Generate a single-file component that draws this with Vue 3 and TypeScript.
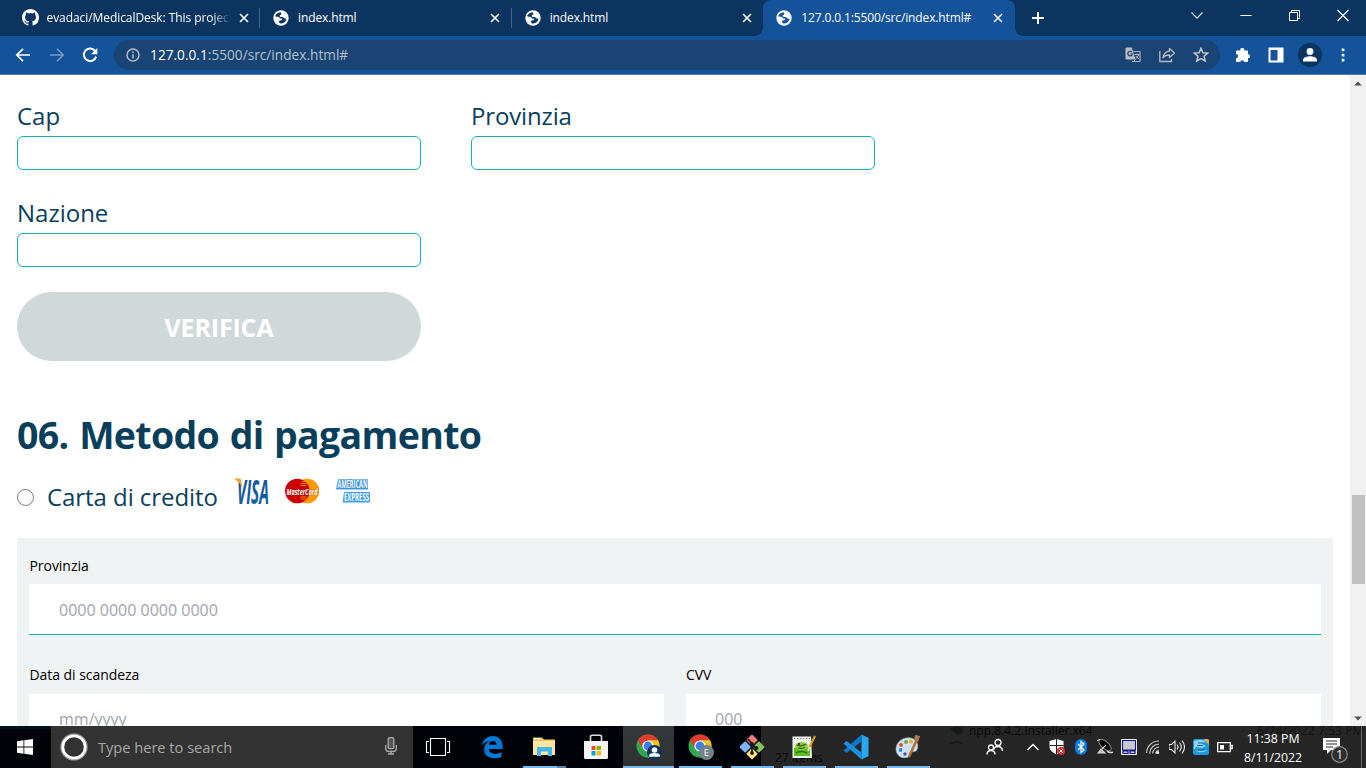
<script setup lang="ts">
import { ref } from 'vue'

interface Tab {
  title: string
  icon: 'github' | 'globe'
  active?: boolean
}

const tabs: Tab[] = [
  { title: 'evadaci/MedicalDesk: This project', icon: 'github' },
  { title: 'index.html', icon: 'globe' },
  { title: 'index.html', icon: 'globe' },
  { title: '127.0.0.1:5500/src/index.html#', icon: 'globe', active: true },
]

const apps = [
  { name: 'taskview', open: false },
  { name: 'edge', open: false },
  { name: 'explorer', open: true },
  { name: 'store', open: false },
  { name: 'chrome', open: true },
  { name: 'chrome-e', open: true },
  { name: 'git', open: true },
  { name: 'npp', open: true },
  { name: 'vscode', open: true },
  { name: 'paint', open: true },
]

const cap = ref('')
const provincia = ref('')
const nazione = ref('')
const cardNumber = ref('')
const expiry = ref('')
const cvv = ref('')
</script>

<template>
  <div class="screen">
    <header class="tabstrip">
      <div v-for="(t, i) in tabs" :key="i" class="tab" :class="{ active: t.active, sep: i < 2 }">
        <svg v-if="t.icon === 'github'" class="fav gh" viewBox="0 0 16 16"><path fill="#fff" d="M8 0C3.58 0 0 3.58 0 8c0 3.54 2.29 6.53 5.47 7.59.4.07.55-.17.55-.38 0-.19-.01-.82-.01-1.49-2.01.37-2.53-.49-2.69-.94-.09-.23-.48-.94-.82-1.13-.28-.15-.68-.52-.01-.53.63-.01 1.08.58 1.23.82.72 1.21 1.87.87 2.33.66.07-.52.28-.87.51-1.07-1.78-.2-3.64-.89-3.64-3.95 0-.87.31-1.59.82-2.15-.08-.2-.36-1.02.08-2.12 0 0 .67-.21 2.2.82a7.6 7.6 0 0 1 4 0c1.53-1.04 2.2-.82 2.2-.82.44 1.1.16 1.92.08 2.12.51.56.82 1.27.82 2.15 0 3.07-1.87 3.75-3.65 3.95.29.25.54.73.54 1.48 0 1.07-.01 1.93-.01 2.2 0 .21.15.46.55.38A8.01 8.01 0 0 0 16 8c0-4.42-3.58-8-8-8z" /></svg>
        <svg v-else class="fav" viewBox="0 0 16 16">
          <circle cx="8" cy="8" r="7.7" fill="#fff" />
          <path class="land" d="M7.500 2.200C5 2.500 3 3.800 2.200 6c1.300 1.200 2.300.4 3.500.9 1.200.5.9 1.500 2.100 1.700 1 .2 1.500.1 1.400.8-.2.9-1.400.6-2.200 1l-1.100.9.2 1.300 1.300.9c2 .3 4.300-.8 5.300-2.700l.8-2.100-1.700-.3c-1.200 0-1.300-1.200-2.200-1.400H7.700L6.500 6c.1-1 1.300-.9 1.800-1.700.3-.7 0-1.500-.8-2.100z" />
        </svg>
        <span class="tab-title">{{ t.title }}</span>
        <svg class="close" viewBox="0 0 10 10"><path d="M1 1l8 8M9 1l-8 8" stroke="#fff" stroke-width="1.6" /></svg>
      </div>
      <svg class="plus" viewBox="0 0 14 14"><path d="M7 1v12M1 7h12" stroke="#fff" stroke-width="2" /></svg>
      <div class="winctl">
        <svg viewBox="0 0 14 14"><path d="M1.500 4.500l5.500 5.700L12.500 4.500" fill="none" stroke="#dde4ec" stroke-width="1.100" /></svg>
        <svg viewBox="0 0 14 14"><path d="M1.500 7.500h11" stroke="#fff" /></svg>
        <svg viewBox="0 0 14 14"><path d="M2.500 4.500h8v8h-8zM4.500 4.500v-2h8v8h-2" fill="none" stroke="#fff" /></svg>
        <svg viewBox="0 0 14 14"><path d="M1.500 2l11 11M12.500 2l-11 11" stroke="#fff" stroke-width="1.1" /></svg>
      </div>
    </header>

    <nav class="toolbar">
      <svg class="nav-ic" viewBox="0 0 16 16"><path d="M15 8H2M8 1.800L1.800 8 8 14.200" fill="none" stroke="#fff" stroke-width="1.700" /></svg>
      <svg class="nav-ic" viewBox="0 0 16 16"><path d="M1 8h13M8 1.800L14.200 8 8 14.200" fill="none" stroke="#7a9cc6" stroke-width="1.500" /></svg>
      <svg class="nav-ic" viewBox="0 0 16 16"><path d="M13.400 4.200A6.300 6.300 0 1 0 14.200 9.600" fill="none" stroke="#fff" stroke-width="2" /><path d="M15.300 1v6.300H9z" fill="#fff" /></svg>
      <div class="omnibox">
        <svg class="info" viewBox="0 0 14 14"><circle cx="7" cy="7" r="6" fill="none" stroke="#b7bec7" stroke-width="1.500" /><path d="M7 6.200v4.300M7 3.500v1.500" stroke="#b7bec7" stroke-width="1.500" /></svg>
        <span class="url"><b>127.0.0.1</b>:5500/src/index.html#</span>
        <div class="omni-actions">
          <svg viewBox="0 0 16 16">
            <path d="M6 4.500h9v10H7" fill="none" stroke="#a9b0b8" stroke-width="1.200" />
            <path d="M.5 1.500Q.5.500 1.500.500H6.700L10.500 12.500H1.500Q.5 12.500.5 11.500z" fill="#b9bdc3" />
            <path d="M7 5.200A2.300 2.300 0 1 0 7.400 7H5.300" fill="none" stroke="#194473" stroke-width="1.200" />
            <path d="M9.500 7.500h5M12 6.500v1M13.500 7.700c-.4 2-1.800 3.200-3 4M10.800 9l3 3M8 15l2.500-2.500" fill="none" stroke="#b9bdc3" />
          </svg>
          <svg viewBox="0 0 16 16"><path d="M.800 4v10.500H12.500V12" fill="none" stroke="#b9bdc3" stroke-width="1.300" /><path d="M10.500 1.500L15.500 6l-5 4.500V8c-3 0-5 .8-6.500 2.700C4.700 7.200 6.600 4.500 10.500 4z" fill="none" stroke="#b9bdc3" stroke-width="1.300" stroke-linejoin="round" /></svg>
          <svg viewBox="0 0 16 16"><path d="M8 1.200l1.900 4.500 4.800.4-3.600 3.200 1.100 4.700L8 11.500 3.800 14l1.100-4.700L1.300 6.100l4.800-.4z" fill="none" stroke="#c3c7cc" stroke-width="1.500" /></svg>
        </div>
      </div>
      <div class="ext">
        <svg viewBox="0 0 16 16"><path fill="#fff" d="M2 3.500h3.300a2 2 0 1 1 3.900 0H12.300Q13 3.500 13 4.200V7.200a2 2 0 1 1 0 4v3Q13 15 12.300 15H9.300a2.100 2.100 0 0 0-4.100 0H2Q1 15 1 14.200V11.300a2.100 2.100 0 0 0 0-4.200V4.200Q1 3.500 2 3.500z" /></svg>
        <svg viewBox="0 0 16 16"><path fill="#fff" fill-rule="evenodd" d="M.5.500h15v15H.5zM2.500 3v10.500h7V3z" /></svg>
        <svg class="profile" viewBox="0 0 24 24"><circle cx="12" cy="12" r="12" fill="#0c3460" /><circle cx="12" cy="8.500" r="3.400" fill="#fff" /><path d="M5 18.500v-1.700c0-2.500 4.500-3.500 7-3.500s7 1 7 3.500v1.700z" fill="#fff" /></svg>
        <svg viewBox="0 0 16 16"><path d="M6.700 1.500h2.700v2.700H6.700zM6.700 6.700h2.700v2.700H6.700zM6.700 11.800h2.700v2.700H6.700z" fill="#e8eef5" /></svg>
      </div>
    </nav>

    <div class="viewport">
      <main class="page">
        <form class="address" @submit.prevent>
          <label class="field"><span>Cap</span><input v-model="cap" type="text" /></label>
          <label class="field"><span class="tight">Provinzia</span><input v-model="provincia" type="text" /></label>
          <label class="field"><span>Nazione</span><input v-model="nazione" type="text" /></label>
        </form>
        <button class="verify" type="button">VERIFICA</button>

        <h1>06. Metodo di pagamento</h1>
        <div class="method">
          <span class="radio"></span>
          <span class="method-name">Carta di credito</span>
          <svg class="card visa" viewBox="0 0 34 26">
            <defs><linearGradient id="vg" x2="0" y2="1"><stop stop-color="#164f93" /><stop offset="1" stop-color="#1463a5" /></linearGradient></defs>
            <text x="2" y="25.500" textLength="32" lengthAdjust="spacingAndGlyphs" font-size="34" font-weight="700" font-style="italic" fill="url(#vg)">VISA</text>
            <path d="M0 .500h5.500L8 12Q6 5 0 1.500z" fill="#f2a62c" />
          </svg>
          <svg class="card" viewBox="0 0 34 26">
            <circle cx="22" cy="13" r="12.300" fill="#f90" />
            <circle cx="12.300" cy="13" r="12.300" fill="#c00" />
            <path d="M17 3.500h5M15.500 5.500h6M15.500 7.500h6M15.500 19h6M15.500 21h6" stroke="#f90" stroke-width=".9" />
            <text x="1.500" y="16.700" textLength="31" lengthAdjust="spacingAndGlyphs" font-size="9.500" font-weight="700" font-style="italic" fill="#fff" stroke="#7a1a10" stroke-width=".5" paint-order="stroke">MasterCard</text>
          </svg>
          <svg class="card" viewBox="0 0 34 26">
            <path d="M2 1.500h30v10H0z" fill="#4ba6e6" />
            <path d="M8 14h26v10.500H6.500z" fill="#4ba6e6" />
            <text x="1.500" y="10.300" textLength="30" lengthAdjust="spacingAndGlyphs" font-size="10.500" font-weight="700" fill="#fff" stroke="#1d78c4" stroke-width="1" paint-order="stroke">AMERICAN</text>
            <text x="8" y="23.200" textLength="25" lengthAdjust="spacingAndGlyphs" font-size="10.500" font-weight="700" fill="#fff" stroke="#2e8fdc" stroke-width="1" paint-order="stroke">EXPRESS</text>
          </svg>
        </div>

        <section class="panel">
          <label class="pay"><span>Provinzia</span><input v-model="cardNumber" placeholder="0000 0000 0000 0000" /></label>
          <div class="pay-row">
            <label class="pay"><span>Data di scandeza</span><input v-model="expiry" placeholder="mm/yyyy" /></label>
            <label class="pay"><span>CVV</span><input v-model="cvv" placeholder="000" /></label>
          </div>
        </section>
      </main>
      <aside class="scrollbar">
        <svg viewBox="0 0 17 17"><path d="M4.500 10.500h8L8.500 6.500z" fill="#505050" /></svg>
        <div class="thumb"></div>
        <svg viewBox="0 0 17 17"><path d="M4.500 6.500h8L8.500 10.500z" fill="#505050" /></svg>
      </aside>
    </div>

    <footer class="taskbar">
      <span class="ghost g-items">27 items</span>
      <span class="ghost g-file">npp.8.4.2.Installer.x64</span>
      <span class="ghost g-date">6/24/2022 7:53 PM</span>
      <svg class="ghost g-icon" viewBox="0 0 16 19"><path d="M1 3l6-3 7 2-1 5-5 2-3-3z" fill="#151b17" /><path d="M1 18q7-4 13 0" fill="none" stroke="#171717" stroke-width="1.500" /></svg>
      <div class="start"><svg viewBox="0 0 16 16"><path fill="#fff" d="M0 2.200L6.500 1.300V7.500H0zM7.300 1.200L16 0V7.500H7.300zM0 8.400h6.500v6.300L0 13.800zM7.300 8.400H16V16l-8.700-1.200z" /></svg></div>
      <div class="search">
        <svg class="cortana" viewBox="0 0 28 28"><circle cx="14" cy="14" r="13" fill="none" stroke="#858585" stroke-width="1.600" /><circle cx="14" cy="14" r="11.200" fill="none" stroke="#fff" stroke-width="2.800" /></svg>
        <span>Type here to search</span>
        <svg class="mic" viewBox="0 0 12 18"><rect x="3.200" y=".700" width="5.600" height="11" rx="1.500" fill="#555" stroke="#aaa" stroke-width="1.300" /><path d="M.7 8v3.500q0 3 3 3h4.600q3 0 3-3V8M6 14.500V17M3 17h6" fill="none" stroke="#aaa" stroke-width="1.300" /></svg>
      </div>

      <div v-for="a in apps" :key="a.name" class="app" :class="[a.name, { open: a.open }]">
        <svg v-if="a.name === 'taskview'" viewBox="0 0 26 26"><path d="M5.500 4.500h15v17h-15zM4 7.500H1.500v11H4M22 7.500h2.500v11H22" fill="none" stroke="#fff" stroke-width="1.100" /></svg>
        <svg v-else-if="a.name === 'edge'" viewBox="0 0 26 26"><path fill="#0078d7" d="M2.800 11.400C4 5.500 8.300 2 13.700 2c6.500 0 9.900 4.700 9.900 10.300V15H9.800c.2 3.300 3.200 4.700 6.200 4.700 2.600 0 4.700-.7 6.500-1.800v4.800c-2 1.100-4.600 1.600-7.300 1.600-6 0-10-3.300-10-8.700 0-3.700 2-6.800 5.300-8.500-3.600.3-6 2-7.700 4.300zM9.900 10.700h7.700c0-2.200-1.300-3.700-3.800-3.700-2.200 0-3.600 1.500-3.900 3.700z" /></svg>
        <svg v-else-if="a.name === 'explorer'" viewBox="0 0 26 26"><path d="M2 3.500h9l2 2h11V21H2z" fill="#eac66a" /><path d="M2 7h22v14H2z" fill="#fce5a0" /><path d="M3 4h6v1.500H3z" fill="#f7f0da" /><path d="M6 22v-9h15v9h-4v-4.500h-7V22z" fill="#45b6e8" /></svg>
        <svg v-else-if="a.name === 'store'" viewBox="0 0 26 26"><path d="M7.500 7V2.500Q7.500 1.300 9 1.300h8Q18.500 1.300 18.500 2.500V7" fill="none" stroke="#ddd" stroke-width="1.600" /><path d="M1 7h24v16.500Q25 25 23.500 25h-21Q1 25 1 23.500z" fill="#f5f5f5" /><path d="M8.500 12h4v4h-4z" fill="#f25022" /><path d="M13.500 12h4.500v4h-4.500z" fill="#7fba00" /><path d="M8.500 17h4v4.500h-4z" fill="#00a4ef" /><path d="M13.500 17h4.500v4.500h-4.500z" fill="#ffb900" /></svg>
        <svg v-else-if="a.name === 'chrome' || a.name === 'chrome-e'" viewBox="0 0 26 26">
          <circle cx="12" cy="12" r="11.500" fill="#2fa84f" />
          <path d="M2 6.300A11.500 11.500 0 0 1 22 6.300H12L7.200 15z" fill="#e33b2e" />
          <path d="M22 6.300A11.500 11.500 0 0 1 12 23.500l5-9-5-8.200z" fill="#fbc116" />
          <circle cx="12" cy="12" r="5.600" fill="#fff" /><circle cx="12" cy="12" r="4.400" fill="#3b7fe8" />
          <template v-if="a.name === 'chrome'"><circle cx="18.500" cy="18.500" r="7.500" fill="#0c3460" /><circle cx="18.500" cy="16" r="2.800" fill="#fff" /><path d="M13.200 22.700v-1.500c0-1.600 3.300-2.300 5.300-2.300s5.300.7 5.300 2.300v1.500z" fill="#fff" /></template>
          <template v-else><circle cx="18.500" cy="18.500" r="7.500" fill="#72838c" /><text x="18.500" y="22" text-anchor="middle" font-size="9.500" fill="#fff">E</text></template>
        </svg>
        <svg v-else-if="a.name === 'git'" viewBox="0 0 26 26"><g transform="rotate(45 13 13)"><rect x="4" y="4" width="8.300" height="8.300" rx="1" fill="#f07c7c" /><rect x="13.700" y="4" width="8.300" height="8.300" rx="1" fill="#86c65a" /><rect x="4" y="13.700" width="8.300" height="8.300" rx="1" fill="#80b3ff" /><rect x="13.700" y="13.700" width="8.300" height="8.300" rx="1" fill="#ffe680" /></g><path d="M9 5l4 5v9M13 11l4 3" fill="none" stroke="#201818" stroke-width="1.700" /><circle cx="13" cy="10" r="1.900" fill="#201818" /><circle cx="17.500" cy="14" r="1.900" fill="#201818" /><circle cx="13" cy="19" r="1.900" fill="#201818" /></svg>
        <svg v-else-if="a.name === 'npp'" viewBox="0 0 26 26"><path d="M1.500 2.500h18.500l1 21.500H1.500z" fill="#f1f3ee" /><path d="M3 14q8-3 16 0v8H3z" fill="#5fbf22" /><ellipse cx="10.500" cy="12" rx="6.500" ry="4" fill="#93cf3d" /><path d="M6 11q4 2 9-1M7 14q3 1 7-.5" fill="none" stroke="#2f5f1e" stroke-width="1.300" /><circle cx="8" cy="10" r="1" fill="#222" /><path d="M5 19q5-3 11 0" fill="none" stroke="#1f7a16" stroke-width="1.500" /><path d="M3 4.500h16" stroke="#888" stroke-dasharray="1.500 1.500" /><path d="M24 2L18 14" stroke="#d99a25" stroke-width="2.200" /><path d="M18.300 13L17 17" stroke="#eee" stroke-width="1.500" /></svg>
        <svg v-else-if="a.name === 'vscode'" viewBox="0 0 26 26"><path d="M18.500.500L25.500 4v18l-7 3.500z" fill="#29a8f0" /><path d="M18.500.500v7L3.500 19 .500 16.500z" fill="#0e78c4" /><path d="M18.500 25.500v-7L3.500 7 .500 9.500z" fill="#1b90dc" /></svg>
        <svg v-else viewBox="0 0 26 26"><path d="M1 15C1 8 8 2.500 16 4c8 2 8 10 5 13-3 2-5-1-6 1s2 4-3 5.500C6 25 1 21 1 15z" fill="#cfe2ec" stroke="#93adbb" stroke-width=".600" /><circle cx="6" cy="11" r="1.900" fill="#e14747" /><circle cx="11" cy="8" r="2" fill="#70ad3d" /><circle cx="16" cy="7.500" r="1.900" fill="#e5b22e" /><circle cx="5.500" cy="16" r="1.900" fill="#3888da" /><circle cx="10" cy="20" r="1.700" fill="#4253b5" /><path d="M23 3L14 23" stroke="#b66b32" stroke-width="2.500" /><path d="M20 1l5 1-2 6-4-2z" fill="#a97b50" /></svg>
      </div>

      <div class="tray">
        <svg class="people" viewBox="0 0 18 18"><circle cx="12" cy="4.500" r="3" /><circle cx="5" cy="9.500" r="2.500" /><path d="M8 11.500q0-3 4-3t4.500 4.500M1 16.500q0-4 4-4t4 4" /></svg>
        <div class="tray-icons">
          <svg viewBox="0 0 16 16"><path d="M2.500 11L8 5.500l5.500 5.500" fill="none" stroke="#fff" stroke-width="1.300" /></svg>
          <svg viewBox="0 0 16 16"><path d="M7.500 0L14.500 2v6q0 4-7 7.500Q.5 12 .5 8V2z" fill="#fff" /><path d="M7.500 0v15.500M.5 6.500h14" stroke="#222" /><circle cx="12" cy="12" r="4" fill="#dc3030" /><path d="M10.300 10.300l3.400 3.400M13.700 10.300l-3.400 3.400" stroke="#fff" /></svg>
          <svg viewBox="0 0 16 16"><rect x="2" y="0" width="12" height="16" rx="6" fill="#087bea" /><path d="M5 5l6 6-3 2.500v-11L11 5l-6 6" fill="none" stroke="#fff" stroke-width="1.200" /></svg>
          <svg viewBox="0 0 16 16"><ellipse cx="8" cy="6" rx="3.600" ry="7.500" transform="rotate(-48 8 6)" fill="#050505" stroke="#8a8a8a" /><path d="M0 1.500l3-1M1 14h7l-4-4zM9 6l-5 5M10 12q3 3 6 1" fill="#bbb" stroke="#ddd" stroke-width="1.100" /></svg>
          <svg viewBox="0 0 16 16"><path d="M.5.500h15v15H.5z" fill="#c9c9cc" stroke="#f0f0f0" /><path d="M1.500 11V1.500h13V11zM2 14.500h5V12H2zM9 14.500h5V12H9z" fill="none" stroke="#14148c" stroke-width="1.100" /></svg>
          <svg viewBox="0 0 16 16"><path d="M1.500 14C2 7 7 2 14 2M4.500 14.500C5 9 9 5.200 14 5M7.500 14.500C8 11 10.500 8.500 14 8M10.500 14.500C11 12.500 12 11.500 14 11" fill="none" stroke="#c7c7c7" stroke-width="1.200" /><circle cx="12.700" cy="13.500" r="1.500" fill="#fff" /></svg>
          <svg viewBox="0 0 16 16"><path d="M0 5.500h2.500L6 2v12l-3.500-3.500H0zM8 5.500q2 2.500 0 5M10.500 3.500q3.500 4.500 0 9M13 1.500q5 6.500 0 13" fill="none" stroke="#eee" stroke-width="1.100" /></svg>
          <svg viewBox="0 0 16 16"><rect width="16" height="16" rx="2" fill="#1f9bdc" /><path d="M11 0h3q2 0 2 2v4z" fill="#e9b53c" /><path d="M1 2q7-2 12 0L9 5l4 2-4 2-6-1-2 3zM3 12q6 3 11-1" fill="#8fd4f2" /><path d="M5 4h6M4 6.500h6M5 11q4 1 7-1" fill="none" stroke="#1268ad" stroke-width="1.200" /></svg>
          <svg viewBox="0 0 16 16"><path d="M.7 3.700h12.600v9H.7zM13.500 6.500h1.700v3h-1.700" fill="none" stroke="#fff" stroke-width="1.300" /><path d="M3 6h4v4.500H3z" fill="#fff" /></svg>
        </div>
        <div class="clock"><span>11:38 PM</span><span>8/11/2022</span></div>
        <svg class="notif" viewBox="0 0 25 25"><path d="M0 0h17v12H8l-4 4v-4H0z" fill="#fff" /><path d="M3 3h11M3 6h11M3 9h7" stroke="#262626" /><circle cx="16.500" cy="16.500" r="7.800" fill="#303030" stroke="#8a8a8a" stroke-width="1.200" /><text x="16.500" y="21" text-anchor="middle" font-size="12.500" fill="#fff">1</text></svg>
      </div>
    </footer>
  </div>
</template>

<style>
html, body { margin: 0; overflow: hidden; }
</style>

<style scoped>
.screen { width: 1366px; height: 768px; display: flex; flex-direction: column; overflow: hidden; background: #fff; font-family: "Open Sans", "Noto Sans", sans-serif; }
.screen * { box-sizing: border-box; }
svg { display: block; flex: none; }

.tabstrip { height: 36px; flex: none; display: flex; background: #0c3460; padding-left: 8.500px; position: relative; }
.tab { position: relative; width: 251.6px; display: flex; align-items: center; padding-left: 13px; color: #fff; font-size: 12px; }
.tab.sep::after { content: ""; position: absolute; right: 0; top: 8px; width: 1px; height: 20px; background: #43638a; }
.tab.active { background: #14529a; border-radius: 8px 8px 0 0; }
.tab.active::before, .tab.active::after { content: ""; position: absolute; bottom: 0; width: 8px; height: 8px; }
.tab.active::before { left: -8px; background: radial-gradient(circle at 0 0, #0c3460 7.5px, #14529a 8px); }
.tab.active::after { right: -8px; background: radial-gradient(circle at 100% 0, #0c3460 7.5px, #14529a 8px); }
.fav { width: 16px; height: 16px; margin-top: -1px; }
.fav.gh { width: 17px; height: 17px; margin: -1px -1px 0 0; }
.land { fill: #0c3460; }
.active .land { fill: #14529a; }
.tab-title { width: 184px; margin-left: 9px; overflow: hidden; white-space: nowrap; letter-spacing: -0.13px; line-height: 35px; height: 36px; }
.tab:first-child .tab-title { letter-spacing: -0.07px; -webkit-mask-image: linear-gradient(90deg, #000 164px, transparent 184px); mask-image: linear-gradient(90deg, #000 164px, transparent 184px); }
.close { width: 10px; height: 10px; margin-left: 8px; }
.plus { width: 14px; height: 14px; margin: 11px 0 0 16.500px; }
.winctl { margin-left: auto; display: flex; gap: 34.500px; padding: 8px 16.500px 0 0; }
.winctl svg { width: 14px; height: 14px; }

.toolbar { height: 39px; flex: none; display: flex; align-items: center; background: #14529a; border-bottom: 1px solid #4a7db8; padding-left: 15px; }
.nav-ic { width: 16px; height: 16px; margin-right: 17.7px; }
.omnibox { width: 1106px; height: 30px; margin-left: -2px; border-radius: 15px; background: #194473; display: flex; align-items: center; padding: 0 11.500px 0 12px; }
.info { width: 14px; height: 14px; }
.url { margin-left: 10px; font-size: 13.6px; color: #b5c0cd; letter-spacing: 0.04px; line-height: 28px; }
.url b { font-weight: 400; color: #fff; }
.omni-actions { margin-left: auto; display: flex; gap: 18px; }
.omni-actions svg, .ext svg { width: 16px; height: 16px; }
.ext { display: flex; align-items: center; margin-left: 15px; gap: 17.3px; }
.ext .profile { width: 24px; height: 24px; margin: 0 -4px; }

.viewport { flex: 1; min-height: 0; display: flex; }
.page { flex: 1; overflow: hidden; padding: 25px 17px 0; color: #0a3f5c; }
.address { display: grid; grid-template-columns: 404px 404px; column-gap: 50px; row-gap: 27px; }
.field span { display: block; height: 36px; line-height: 31px; font-size: 24px; }
.field .tight { letter-spacing: -0.15px; }
.field input { display: block; width: 404px; height: 34px; border: 1px solid #14b4b4; border-radius: 6px; background: #fff; outline: none; }
.verify { display: block; width: 404px; height: 69px; margin: 25px 0 0; padding: 0; border: 0; border-radius: 35px; background: #d0d8da; color: #fff; font: 700 25px "Open Sans", sans-serif; letter-spacing: -0.15px; }
h1 { margin: 46px 0 0; height: 56px; line-height: 55px; font-size: 37.5px; font-weight: 700; letter-spacing: -0.5px; word-spacing: 1.500px; padding: 0; letter-spacing: -0.67px; }
.method { display: flex; height: 75px; padding-top: 15px; }
.radio { width: 17px; height: 17px; margin-top: 11px; border: 1px solid #767676; border-radius: 50%; }
.method-name { width: 189px; margin-left: 13px; margin-right: -1px; font-size: 24px; line-height: 38px; letter-spacing: -0.06px; }
.card { width: 34px; height: 26px; margin-right: 17px; }
.card + .card { position: relative; left: -0.7px; }

.panel { height: 260px; background: #eff3f4; padding: 12px; color: #000; }
.pay { display: block; flex: 1; }
.pay span { display: block; height: 34px; line-height: 31px; font-size: 14px; letter-spacing: -0.05px; padding-left: 0.500px; }
.pay-row .pay span { line-height: 29px; }
.pay-row .pay + .pay span { padding-left: 0; }
.pay input { display: block; width: 100%; height: 51px; border: 0; border-bottom: 1px solid #14b4b4; padding: 1px 30px 0; font: 16px "Open Sans", sans-serif; outline: none; background: #fff; }
.pay-row .pay input { padding-top: 0; padding-bottom: 1px; }
.pay-row .pay + .pay input { padding-left: 29px; }
.pay input::placeholder { color: #9ea3ae; opacity: 1; }
.pay-row { display: flex; gap: 22px; margin-top: 25px; }
.scrollbar { width: 16px; flex: none; background: #f1f1f1; display: flex; flex-direction: column; }
.scrollbar svg { width: 16px; height: 17px; }
.thumb { width: 13px; height: 89px; margin: 403px auto auto 2px; background: #c1c1c1; }
.scrollbar svg:last-child { margin-bottom: -1px; }

.taskbar { height: 42px; flex: none; display: flex; position: relative; overflow: hidden; background: linear-gradient(90deg, #000307 761px, #262626 761px); }
.ghost { position: absolute; color: #080808; font-size: 12px; line-height: 16px; white-space: nowrap; }
.g-items { left: 775px; top: 24px; z-index: 1; }
.g-file { left: 969px; top: -3px; }
.g-date { left: 1257px; top: -3px; font-size: 12.2px; color: #121212; }
.g-icon { left: 949px; top: 0; width: 16px; height: 19px; }
.start { width: 51px; padding: 10px 0 0 17px; border-top: 3px solid #00131a; }
.start svg { width: 16px; height: 16px; }
.search { width: 362px; background: #333; color: #a8a8a8; font-size: 14.6px; display: flex; align-items: center; padding-left: 9px; }
.search span { margin-left: 10px; line-height: 40px; }
.cortana { width: 28px; height: 28px; }
.mic { width: 12px; height: 18px; margin: -2px 16px 0 auto; }
.app { width: 52px; flex: none; display: flex; justify-content: center; padding-top: 8px; position: relative; }
.app.taskview { width: 53px; padding-right: 4px; }
.app svg { width: 26px; height: 26px; position: relative; z-index: 2; }
.app.chrome svg, .app.chrome-e svg { left: 1px; }
.app.open::after { content: ""; position: absolute; bottom: 0; left: 5px; width: 43px; height: 2px; background: #76b9ed; }
.app.explorer::after { background: linear-gradient(90deg, #76b9ed 34px, #5682a6 34px); }
.app.chrome { background: linear-gradient(#343839, #303133) 1px 0 / 51px 100% no-repeat; }
.app.chrome::after { left: 1px; width: 51px; }
.tray { margin-left: auto; display: flex; padding-right: 5px; position: relative; }
.tray::after { content: ""; position: absolute; right: 4px; top: 0; bottom: 0; width: 1px; background: #666; }
.people { width: 18px; height: 18px; margin: 12px 17px 0 0; fill: none; stroke: #fff; stroke-width: 1.3; }
.tray-icons { display: flex; gap: 8px; padding: 13px 10px 0 4px; }
.tray-icons svg { width: 16px; height: 16px; }
.clock { width: 60px; display: flex; flex-direction: column; align-items: center; color: #fff; font-size: 12.3px; line-height: 19px; padding-top: 3px; white-space: nowrap; }
.notif { width: 25px; height: 25px; margin: 12px 13px 0 20px; }
</style>
